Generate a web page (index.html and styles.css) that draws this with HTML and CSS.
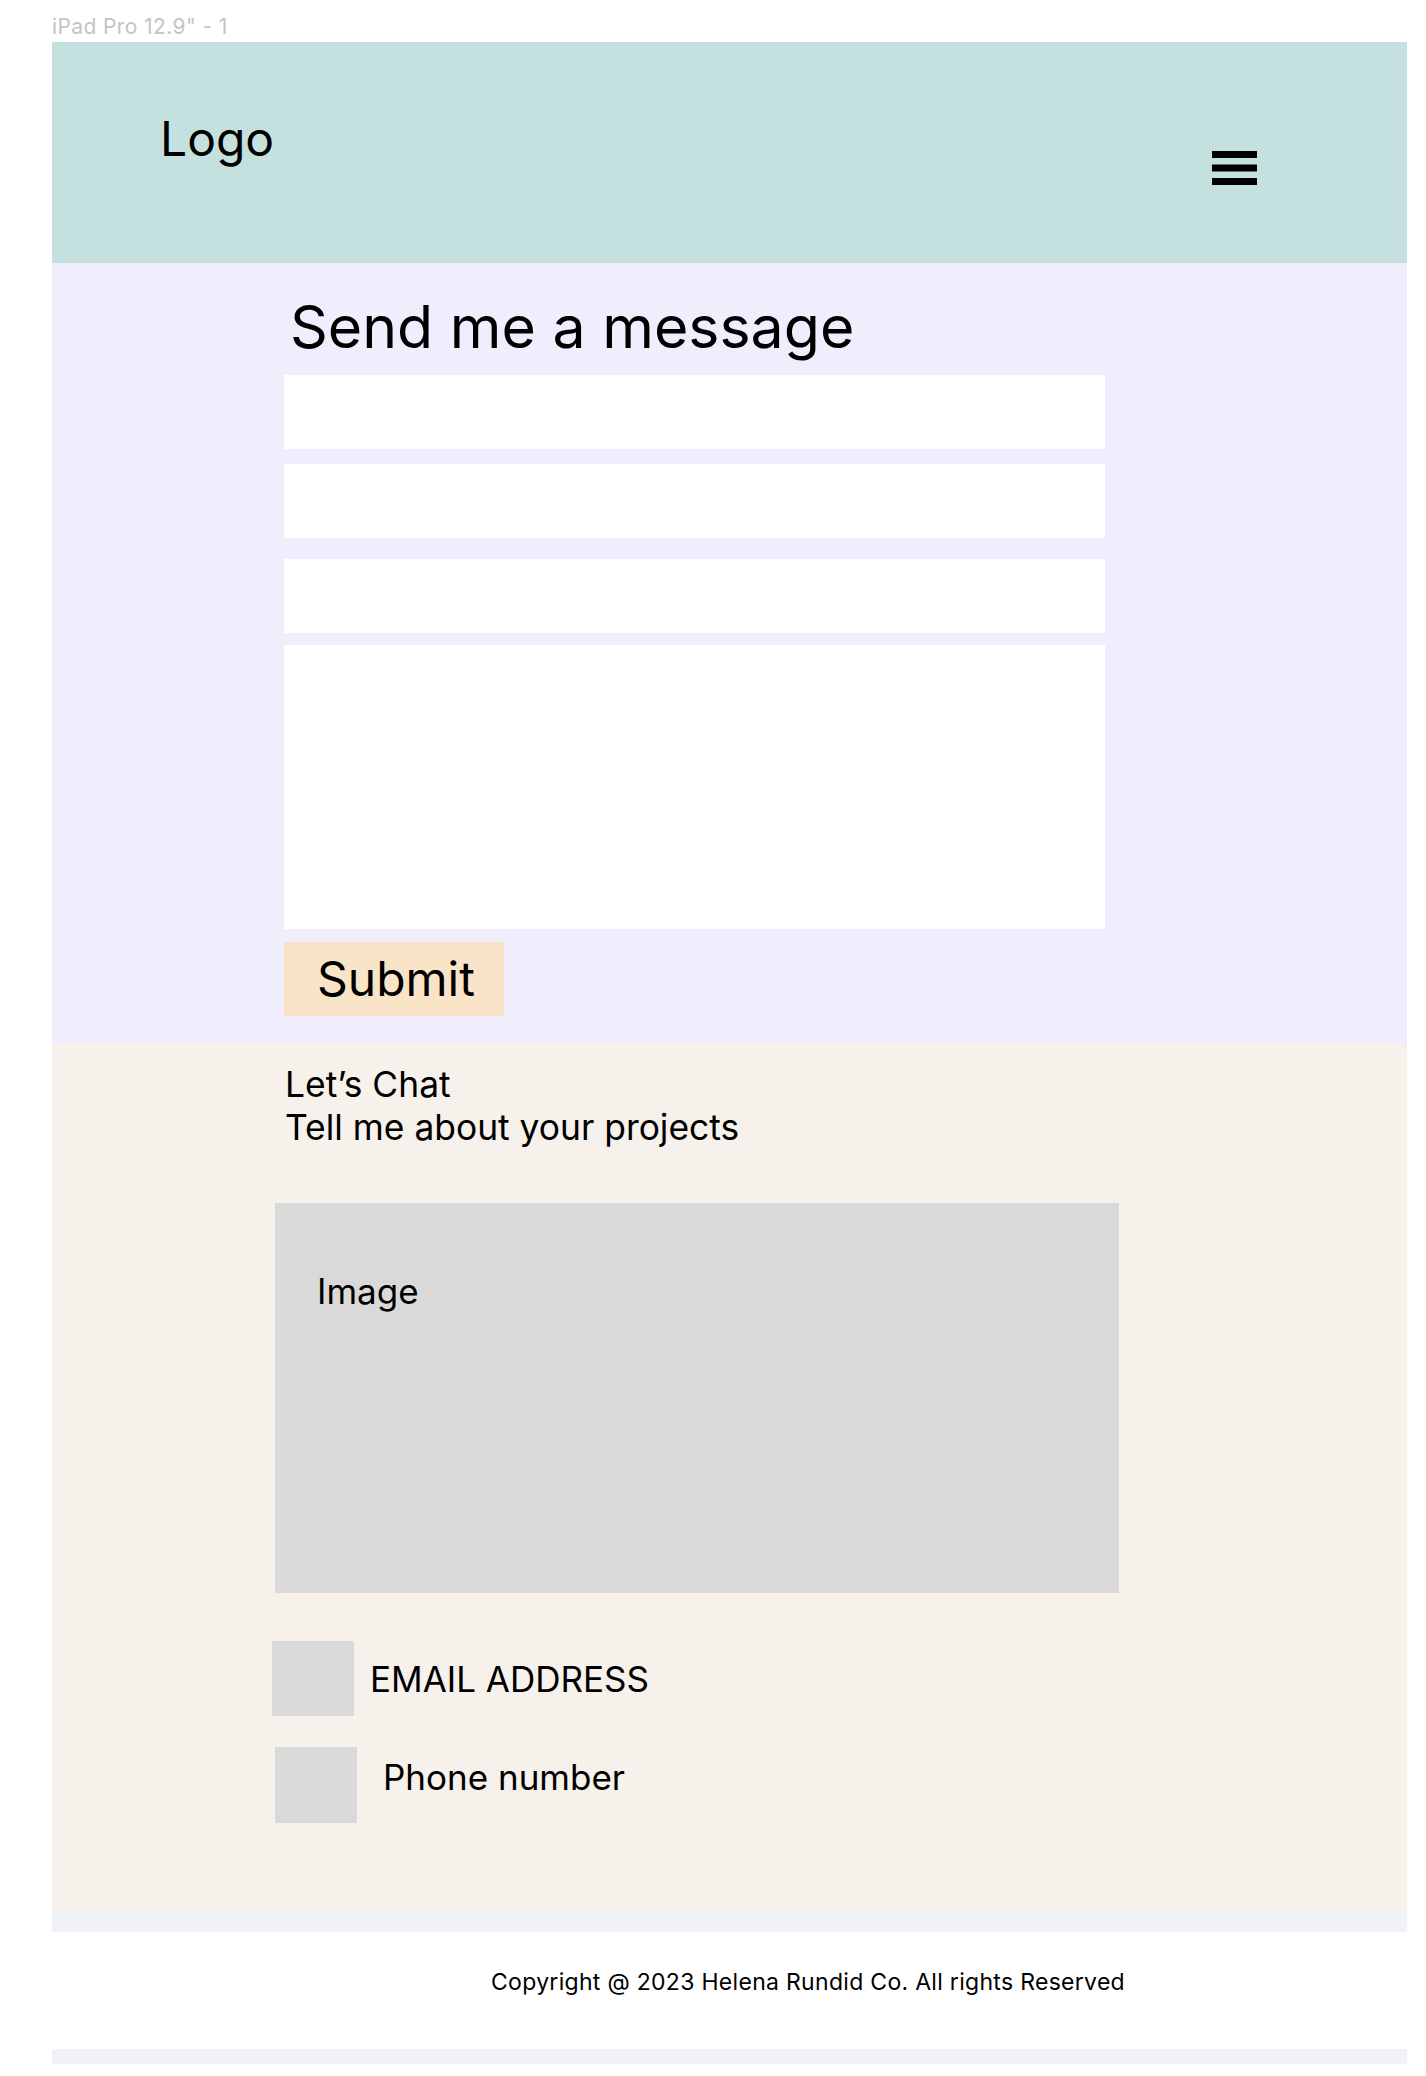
FILE: index.html
```html
<!DOCTYPE html>
<html lang="en">
<head>
<meta charset="utf-8">
<title>Contact</title>
<link rel="stylesheet" href="styles.css">
</head>
<body>
<div class="canvas">
  <div class="frame-label">iPad Pro 12.9" - 1</div>
  <div class="frame">
    <header class="site-header">
      <div class="logo">Logo</div>
      <button class="menu" aria-label="Menu">
        <svg width="45" height="34" viewBox="0 0 45 34" aria-hidden="true">
          <rect x="0" y="0" width="45" height="7" fill="#000"/>
          <rect x="0" y="13.5" width="45" height="7" fill="#000"/>
          <rect x="0" y="27" width="45" height="7" fill="#000"/>
        </svg>
      </button>
    </header>

    <section class="contact-form">
      <h1 class="form-title">Send me a message</h1>
      <form class="form">
        <input class="field field-1" type="text" aria-label="Name">
        <input class="field field-2" type="text" aria-label="Email">
        <input class="field field-3" type="text" aria-label="Subject">
        <textarea class="field message" aria-label="Message"></textarea>
        <button class="submit" type="button">Submit</button>
      </form>
    </section>

    <section class="chat">
      <div class="intro">
        <div>Let’s Chat</div>
        <div>Tell me about your projects</div>
      </div>
      <div class="image-box">Image</div>
      <div class="contact-row email-row">
        <div class="contact-icon email-icon"></div>
        <div class="contact-text">EMAIL ADDRESS</div>
      </div>
      <div class="contact-row phone-row">
        <div class="contact-icon phone-icon"></div>
        <div class="contact-text">Phone number</div>
      </div>
    </section>

    <footer class="site-footer">
      <p class="copyright">Copyright @ 2023 Helena Rundid Co. All rights Reserved</p>
    </footer>
  </div>
</div>
</body>
</html>
```

FILE: styles.css
```css
* {
  box-sizing: border-box;
}

body {
  margin: 0;
  background: #ffffff;
  font-family: Inter, "Noto Sans", "Liberation Sans", sans-serif;
  color: #000000;
}

.canvas {
  padding-left: 52px;
  width: 1426px;
}

.frame-label {
  height: 42px;
  padding-top: 14px;
  font-size: 21px;
  line-height: 25px;
  letter-spacing: 0.4px;
  color: #c4c4c4;
}

.frame {
  width: 1355px;
}

/* Header */
.site-header {
  height: 221px;
  background: #c4e1e0;
  display: flex;
  justify-content: space-between;
  align-items: flex-start;
  padding: 68px 150px 0 108px;
}

.logo {
  font-size: 48px;
  line-height: 58px;
}

.menu {
  margin-top: 41px;
  padding: 0;
  border: 0;
  background: none;
  display: block;
}

.menu svg {
  display: block;
}

/* Form section */
.contact-form {
  height: 781px;
  background: #f0eefc;
  padding: 28px 0 0 232px;
}

.form-title {
  margin: 0 0 13px 6px;
  font-size: 59px;
  font-weight: 400;
  line-height: 71px;
}

.form {
  display: flex;
  flex-direction: column;
  align-items: flex-start;
}

.field {
  display: block;
  width: 821px;
  height: 74px;
  border: 0;
  background: #ffffff;
  padding: 0;
  margin: 0;
  font: inherit;
  outline: none;
  resize: none;
}

.field-1 { margin-bottom: 15px; }
.field-2 { margin-bottom: 21px; }
.field-3 { margin-bottom: 12px; }

.message {
  height: 284px;
  margin-bottom: 13px;
}

.submit {
  width: 220px;
  height: 74px;
  border: 0;
  background: #fae4c8;
  font-family: inherit;
  font-size: 48px;
  line-height: 58px;
  color: #000000;
  text-align: left;
  padding: 0 0 0 33px;
}

/* Chat section */
.chat {
  height: 868px;
  background: #f6f1eb;
  padding-top: 19px;
}

.intro {
  margin-left: 233px;
  font-size: 35.4px;
  line-height: 43px;
}

.image-box {
  margin: 54px 0 0 223px;
  width: 844px;
  height: 390px;
  background: #d9d9d9;
  padding: 67px 0 0 42px;
  font-size: 35px;
  line-height: 42px;
}

.contact-row {
  display: flex;
  align-items: flex-start;
}

.contact-icon {
  width: 82px;
  background: #d9d9d9;
  flex: none;
}

.contact-text {
  font-size: 35px;
  line-height: 42px;
}

.email-row {
  margin: 48px 0 0 220px;
  gap: 16px;
}

.email-icon {
  height: 75px;
}

.email-row .contact-text {
  margin-top: 17px;
}

.phone-row {
  margin: 31px 0 0 223px;
  gap: 26px;
}

.phone-icon {
  height: 76px;
}

.phone-row .contact-text {
  margin-top: 9px;
}

/* Footer */
.site-footer {
  height: 152px;
  border-top: 20px solid #f0f2f7;
  border-bottom: 15px solid #f0f2f7;
  background: #ffffff;
  padding: 36px 0 0 439px;
}

.copyright {
  margin: 0;
  font-size: 23px;
  line-height: 28px;
  letter-spacing: 0.3px;
}
```
